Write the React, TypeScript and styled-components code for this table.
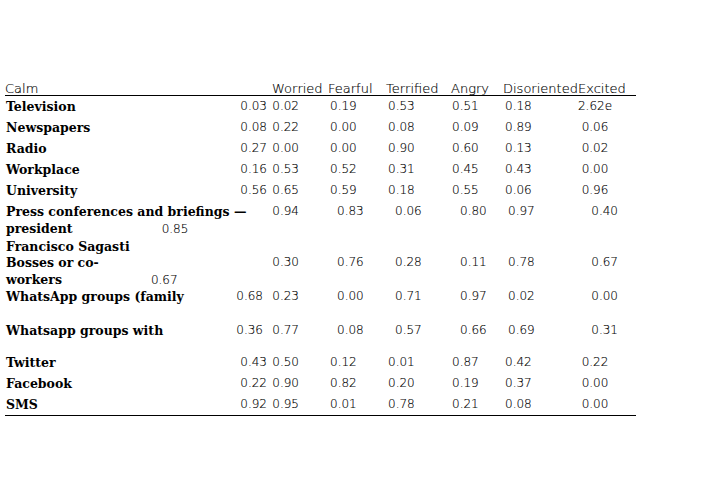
import React from 'react';
import styled, { createGlobalStyle, css } from 'styled-components';

const GlobalStyle = createGlobalStyle`
  html, body {
    margin: 0;
    padding: 0;
    background: #ffffff;
  }
  body {
    width: 716px;
    height: 490px;
    overflow: hidden;
  }
`;

const COLS = '231px 32px 32px 80px 60px 57px 75px 64px';

const Page = styled.div`
  padding: 78px 0 0 5px;
  color: #000;
`;

const Table = styled.div`
  width: 631px;
  border-bottom: 1px solid #000;
`;

const thin = css`
  font-family: 'DejaVu Sans', sans-serif;
  font-weight: 200;
  color: #000;
  -webkit-text-stroke: 0.15px #000;
`;

const HeaderRow = styled.div`
  display: grid;
  grid-template-columns: ${COLS};
  height: 15px;
  padding-top: 2px;
  line-height: 17px;
  border-bottom: 1px solid #000;
  font-size: 13px;
  white-space: nowrap;
  ${thin}
`;

const HeadCell = styled.div<{ $pad?: number; $span?: number }>`
  padding-left: ${(p) => p.$pad ?? 0}px;
  ${(p) => p.$span && css`grid-column: span ${p.$span};`}
`;

const Row = styled.div<{ $loose?: boolean; $height?: number; $top?: number }>`
  display: grid;
  grid-template-columns: ${COLS};
  align-items: ${(p) => (p.$loose ? 'start' : 'center')};
  height: ${(p) => p.$height ?? 21}px;
  padding-top: ${(p) => p.$top ?? 0}px;
  line-height: 17px;
  white-space: nowrap;
`;

const Label = styled.div<{ $span?: number }>`
  font-family: 'DejaVu Serif', serif;
  font-weight: bold;
  font-size: 12.5px;
  padding-left: 1px;
  ${(p) => p.$span && css`grid-column: span ${p.$span};`}
`;

const Num = styled.span`
  ${thin}
  font-size: 12px;
`;

const InlineCalm = styled(Num)<{ $indent: number }>`
  position: relative;
  left: ${(p) => p.$indent}px;
`;

type Align = 'left' | 'right' | 'center';

const Cell = styled(Num)<{ $align: Align; $pl?: number; $pr?: number }>`
  display: block;
  text-align: ${(p) => p.$align};
  padding-left: ${(p) => p.$pl ?? 0}px;
  padding-right: ${(p) => p.$pr ?? 0}px;
`;

interface RowData {
  label: string[];
  calm: string;
  vals: string[];
  loose?: boolean;
  height?: number;
  top?: number;
  inlineCalm?: { line: number; indent: number };
}

const rows: RowData[] = [
  { label: ['Television'], calm: '0.03', vals: ['0.02', '0.19', '0.53', '0.51', '0.18', '2.62e'] },
  { label: ['Newspapers'], calm: '0.08', vals: ['0.22', '0.00', '0.08', '0.09', '0.89', '0.06'] },
  { label: ['Radio'], calm: '0.27', vals: ['0.00', '0.00', '0.90', '0.60', '0.13', '0.02'] },
  { label: ['Workplace'], calm: '0.16', vals: ['0.53', '0.52', '0.31', '0.45', '0.43', '0.00'] },
  { label: ['University'], calm: '0.56', vals: ['0.65', '0.59', '0.18', '0.55', '0.06', '0.96'] },
  {
    label: ['Press conferences and briefings —', 'president', 'Francisco Sagasti'],
    calm: '0.85',
    vals: ['0.94', '0.83', '0.06', '0.80', '0.97', '0.40'],
    loose: true,
    height: 51,
    top: 2,
    inlineCalm: { line: 1, indent: 89 },
  },
  {
    label: ['Bosses or co-', 'workers'],
    calm: '0.67',
    vals: ['0.30', '0.76', '0.28', '0.11', '0.78', '0.67'],
    loose: true,
    height: 34,
    inlineCalm: { line: 1, indent: 89 },
  },
  {
    label: ['WhatsApp groups (family'],
    calm: '0.68',
    vals: ['0.23', '0.00', '0.71', '0.97', '0.02', '0.00'],
    loose: true,
    height: 34,
  },
  {
    label: ['Whatsapp groups with'],
    calm: '0.36',
    vals: ['0.77', '0.08', '0.57', '0.66', '0.69', '0.31'],
    loose: true,
    height: 30,
  },
  { label: ['Twitter'], calm: '0.43', vals: ['0.50', '0.12', '0.01', '0.87', '0.42', '0.22'] },
  { label: ['Facebook'], calm: '0.22', vals: ['0.90', '0.82', '0.20', '0.19', '0.37', '0.00'] },
  { label: ['SMS'], calm: '0.92', vals: ['0.95', '0.01', '0.78', '0.21', '0.08', '0.00'] },
];

// left padding of Fearful..Disoriented columns, tight rows vs loose rows
const TIGHT_PAD = [30, 8, 12, 8];
const LOOSE_PAD = [37, 15, 20, 11];

const headers: { text: string; pad: number }[] = [
  { text: 'Worried', pad: 4 },
  { text: 'Fearful', pad: 28 },
  { text: 'Terrified', pad: 6 },
  { text: 'Angry', pad: 11 },
  { text: 'Disoriented', pad: 6 },
  { text: 'Excited', pad: 6 },
];

function DataRow({ row }: { row: RowData }) {
  const pads = row.loose ? LOOSE_PAD : TIGHT_PAD;
  const [worried, ...rest] = row.vals;
  const excited = rest[rest.length - 1];
  const middle = rest.slice(0, rest.length - 1);
  return (
    <Row $loose={row.loose} $height={row.height} $top={row.top}>
      {row.inlineCalm ? (
        <Label $span={2}>
          {row.label.map((line, i) => (
            <div key={i}>
              {line}
              {row.inlineCalm && row.inlineCalm.line === i && (
                <InlineCalm $indent={row.inlineCalm.indent}>{row.calm}</InlineCalm>
              )}
            </div>
          ))}
        </Label>
      ) : (
        <>
          <Label>
            {row.label.map((line, i) => (
              <div key={i}>{line}</div>
            ))}
          </Label>
          <Cell $align="right" $pr={row.loose ? 5 : 1}>
            {row.calm}
          </Cell>
        </>
      )}
      <Cell $align="right" $pr={1}>
        {worried}
      </Cell>
      {middle.map((v, i) => (
        <Cell key={i} $align="left" $pl={pads[i]}>
          {v}
        </Cell>
      ))}
      <Cell $align={row.loose ? 'right' : 'center'} $pr={18}>
        {excited}
      </Cell>
    </Row>
  );
}

export default function App() {
  return (
    <>
      <GlobalStyle />
      <Page>
        <Table>
          <HeaderRow>
            <HeadCell $span={2}>Calm</HeadCell>
            {headers.map((h) => (
              <HeadCell key={h.text} $pad={h.pad}>
                {h.text}
              </HeadCell>
            ))}
          </HeaderRow>
          {rows.map((r, i) => (
            <DataRow key={i} row={r} />
          ))}
        </Table>
      </Page>
    </>
  );
}
